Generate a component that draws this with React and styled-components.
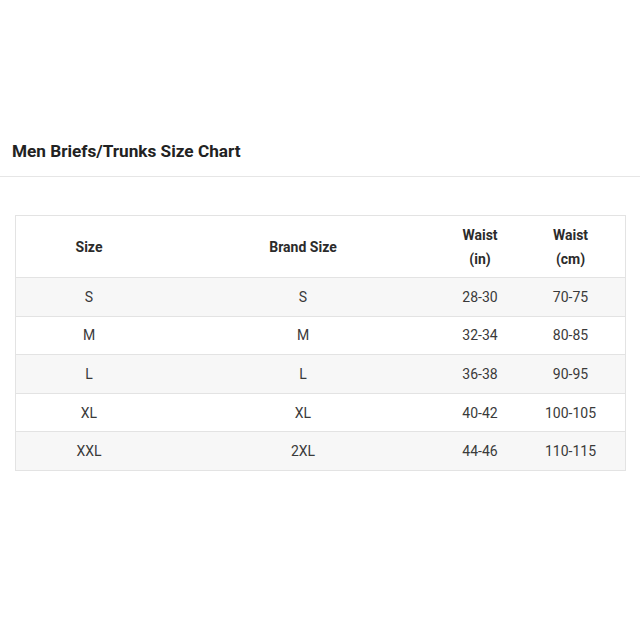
import React from "react";
import styled, { createGlobalStyle } from "styled-components";

const Global = createGlobalStyle`
  html, body { margin: 0; padding: 0; background: #fff; }
  body { font-family: Roboto, "Liberation Sans", Arial, sans-serif; }
`;

const Page = styled.div`
  width: 640px;
  height: 640px;
  background: #fff;
  padding-top: 139px;
  box-sizing: border-box;
`;

const Header = styled.div`
  height: 37px;
  border-bottom: 1px solid #e6e6e6;
  padding-left: 12px;
  display: flex;
  align-items: flex-start;
`;

const Title = styled.h2`
  margin: 0;
  font-size: 17.2px;
  font-weight: 700;
  line-height: 25px;
  color: #222;
`;

const TableWrap = styled.div`
  padding: 38px 16px 0 15px;
`;

const Table = styled.table`
  width: 609px;
  border-collapse: collapse;
  border: 1px solid #e3e3e3;
  table-layout: fixed;
  font-size: 14px;
`;

const Th = styled.th`
  height: 61px;
  padding: 0;
  text-align: center;
  font-weight: 700;
  color: #2b2b2b;
  line-height: 24px;
  width: ${(p) => p.$w}px;
`;

const Row = styled.tr`
  border-top: 1px solid #e3e3e3;
  background: ${(p) => (p.$striped ? "#f7f7f7" : "#fff")};
`;

const Td = styled.td`
  height: 37.6px;
  padding: 0;
  text-align: center;
  color: #3a3a3a;
`;

const cols = [
  { label: "Size", w: 146 },
  { label: "Brand Size", w: 282 },
  { label: ["Waist", "(in)"], w: 72 },
  { label: ["Waist", "(cm)"], w: 109 },
];

const rows = [
  ["S", "S", "28-30", "70-75"],
  ["M", "M", "32-34", "80-85"],
  ["L", "L", "36-38", "90-95"],
  ["XL", "XL", "40-42", "100-105"],
  ["XXL", "2XL", "44-46", "110-115"],
];

export default function App() {
  return (
    <>
      <Global />
      <Page>
        <Header>
          <Title>Men Briefs/Trunks Size Chart</Title>
        </Header>
        <TableWrap>
          <Table>
            <thead>
              <tr>
                {cols.map((c, i) => (
                  <Th key={i} $w={c.w}>
                    {Array.isArray(c.label) ? (
                      <>
                        {c.label[0]}
                        <br />
                        {c.label[1]}
                      </>
                    ) : (
                      c.label
                    )}
                  </Th>
                ))}
              </tr>
            </thead>
            <tbody>
              {rows.map((r, i) => (
                <Row key={i} $striped={i % 2 === 0}>
                  {r.map((v, j) => (
                    <Td key={j}>{v}</Td>
                  ))}
                </Row>
              ))}
            </tbody>
          </Table>
        </TableWrap>
      </Page>
    </>
  );
}
